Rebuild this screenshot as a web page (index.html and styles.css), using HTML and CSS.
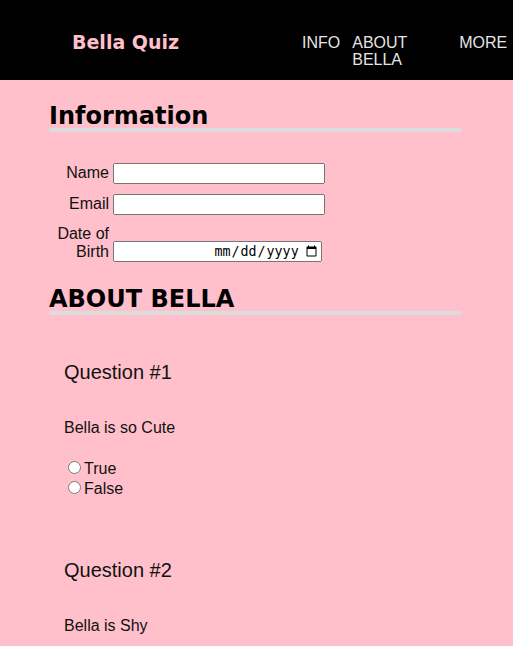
FILE: index.html
```html
<!DOCTYPE html>
<html lang="en">
<head>
<meta charset="utf-8">
<title>Bella Quiz</title>
<link rel="stylesheet" href="styles.css">
</head>
<body>
<header class="site-header">
  <div class="logo">Bella Quiz</div>
  <nav class="nav">
    <a class="nav-item" href="#info">INFO</a>
    <a class="nav-item nav-item-wide" href="#about">ABOUT BELLA</a>
    <a class="nav-item" href="#more">MORE</a>
  </nav>
</header>
<main class="content">
  <h2 class="section-title" id="info">Information</h2>
  <form class="info-form">
    <label class="field-label" for="name">Name</label>
    <input class="text-input" type="text" id="name">
    <label class="field-label" for="email">Email</label>
    <input class="text-input" type="email" id="email">
    <label class="field-label" for="dob">Date of Birth</label>
    <input class="date-input" type="date" id="dob">
  </form>
  <h2 class="section-title section-title-spaced" id="about">ABOUT BELLA</h2>
  <section class="question">
    <h3 class="question-title">Question #1</h3>
    <p class="question-text">Bella is so Cute</p>
    <div class="options">
      <label class="option"><input class="radio" type="radio" name="q1">True</label><br>
      <label class="option"><input class="radio" type="radio" name="q1">False</label>
    </div>
  </section>
  <section class="question question-next">
    <h3 class="question-title">Question #2</h3>
    <p class="question-text">Bella is Shy</p>
    <div class="options">
      <label class="option"><input class="radio" type="radio" name="q2">True</label><br>
      <label class="option"><input class="radio" type="radio" name="q2">False</label>
    </div>
  </section>
</main>
</body>
</html>
```
FILE: styles.css
```css
html, body {
  margin: 0;
  padding: 0;
}
body {
  background: #ffc0cb;
  font-family: "Liberation Sans", Arial, sans-serif;
  font-size: 16px;
  color: #000;
}
.site-header {
  background: #000;
  height: 80px;
  display: flex;
  align-items: flex-start;
  padding-left: 72px;
  box-sizing: border-box;
}
.logo {
  flex: 0 0 230px;
  padding-top: 31px;
  font-family: "DejaVu Sans", Verdana, sans-serif;
  font-weight: bold;
  font-size: 19px;
  color: #ffc0cb;
}
.nav {
  display: flex;
  gap: 12px;
  padding-top: 34px;
  line-height: 17px;
}
.nav-item {
  color: #e4e4e4;
  text-decoration: none;
}
.nav-item-wide {
  width: 95px;
}
.content {
  margin: 0 52px 0 49px;
}
.section-title {
  font-family: "DejaVu Sans", Verdana, sans-serif;
  font-weight: bold;
  font-size: 24px;
  line-height: 24px;
  margin: 24px 0 0;
  border-bottom: 4px solid #dcdcdc;
}
.section-title-spaced {
  margin-top: 26px;
}
.info-form {
  display: grid;
  grid-template-columns: 60px auto;
  justify-content: start;
  column-gap: 4px;
  row-gap: 10px;
  align-items: last baseline;
  margin-top: 31px;
}
.field-label {
  text-align: right;
  color: #111;
}
.text-input {
  width: 212px;
  box-sizing: border-box;
  margin: 0;
}
.date-input {
  width: 209px;
  box-sizing: border-box;
  margin: 0 0 -1px;
  align-self: end;
  text-align: right;
}
.date-input::-webkit-calendar-picker-indicator {
  margin-left: 3px;
}
.question {
  padding-left: 15px;
  margin-top: 46px;
}
.question-next {
  margin-top: 61px;
}
.question-title {
  font-size: 20px;
  font-weight: normal;
  margin: 0;
  color: #111;
}
.question-text {
  margin: 35px 0 0;
  color: #111;
}
.options {
  margin-top: 21px;
}
.option {
  color: #111;
}
.radio {
  margin: 3px 3px 0 4px;
}
```
